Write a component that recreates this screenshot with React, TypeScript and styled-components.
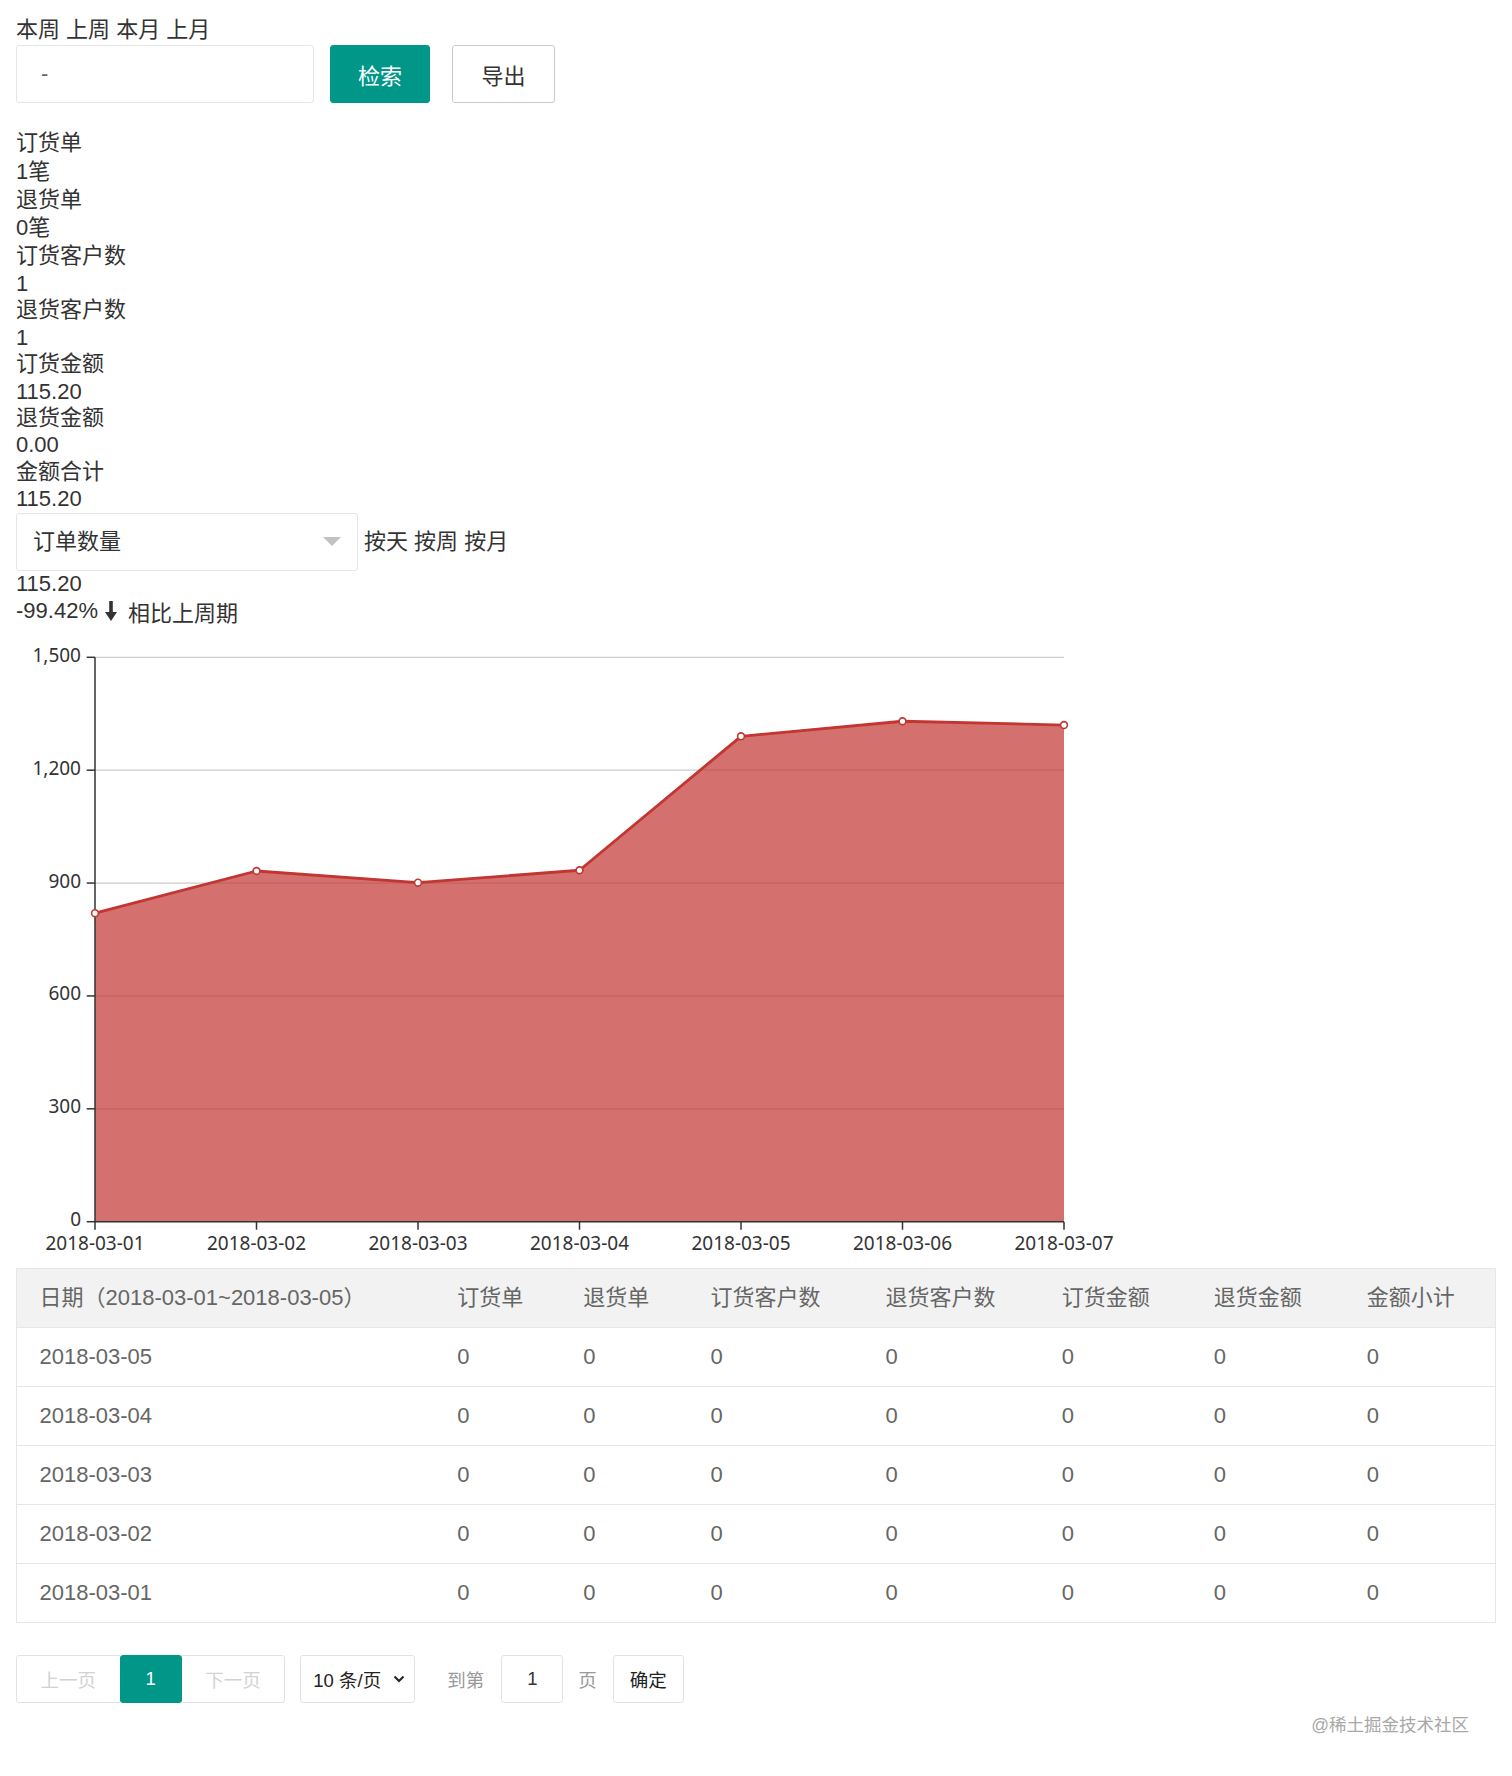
import styled, { createGlobalStyle } from 'styled-components'

//-----------------------------------------------------------------------------
// Data
//-----------------------------------------------------------------------------
const stats: [string, string][] = [
  ['订货单', '1笔'],
  ['退货单', '0笔'],
  ['订货客户数', '1'],
  ['退货客户数', '1'],
  ['订货金额', '115.20'],
  ['退货金额', '0.00'],
  ['金额合计', '115.20']
]

const days = [
  '2018-03-01',
  '2018-03-02',
  '2018-03-03',
  '2018-03-04',
  '2018-03-05',
  '2018-03-06',
  '2018-03-07'
]
const values = [820, 932, 901, 934, 1290, 1330, 1320]

const columns = [
  { title: '日期（2018-03-01~2018-03-05）', width: 418 },
  { title: '订货单', width: 126 },
  { title: '退货单', width: 127 },
  { title: '订货客户数', width: 175 },
  { title: '退货客户数', width: 176 },
  { title: '订货金额', width: 152 },
  { title: '退货金额', width: 153 },
  { title: '金额小计', width: 151 }
]
const rows = ['2018-03-05', '2018-03-04', '2018-03-03', '2018-03-02', '2018-03-01']

const hasCJK = (s: string): boolean => /[\u4e00-\u9fff]/.test(s)

//-----------------------------------------------------------------------------
// Chart
//-----------------------------------------------------------------------------
const PLOT_LEFT = 79
const PLOT_RIGHT = 1048
const PLOT_TOP = 32.3
const PLOT_BOTTOM = 596.7
const Y_MAX = 1500

const xAt = (i: number): number =>
  PLOT_LEFT + (i * (PLOT_RIGHT - PLOT_LEFT)) / (days.length - 1)
const yAt = (v: number): number =>
  PLOT_BOTTOM - (v * (PLOT_BOTTOM - PLOT_TOP)) / Y_MAX

const AreaChart = (): JSX.Element => {
  const points = values.map((v, i) => `${xAt(i)},${yAt(v)}`).join(' ')
  const area = `${PLOT_LEFT},${PLOT_BOTTOM} ${points} ${PLOT_RIGHT},${PLOT_BOTTOM}`
  const ticks = [0, 300, 600, 900, 1200, 1500]

  return (
    <ChartSvg width={1110} height={643} viewBox="0 0 1110 643">
      {ticks.map((t) => (
        <g key={t}>
          {t > 0 && (
            <line
              x1={PLOT_LEFT}
              x2={PLOT_RIGHT}
              y1={yAt(t)}
              y2={yAt(t)}
              stroke="#ccc"
              strokeWidth={1.2}
            />
          )}
          <line
            x1={70.7}
            x2={PLOT_LEFT}
            y1={yAt(t)}
            y2={yAt(t)}
            stroke="#333"
            strokeWidth={1.5}
          />
          <AxisLabel x={65} y={yAt(t) - 2.5} textAnchor="end" dominantBaseline="central">
            {t.toLocaleString('en-US')}
          </AxisLabel>
        </g>
      ))}
      <polygon points={area} fill="rgba(194,53,49,0.7)" />
      <polyline
        points={points}
        fill="none"
        stroke="#c23531"
        strokeWidth={2.8}
        strokeLinejoin="round"
      />
      <line
        x1={PLOT_LEFT}
        x2={PLOT_LEFT}
        y1={PLOT_TOP}
        y2={PLOT_BOTTOM}
        stroke="#333"
        strokeWidth={1.5}
      />
      <line
        x1={PLOT_LEFT}
        x2={PLOT_RIGHT}
        y1={PLOT_BOTTOM}
        y2={PLOT_BOTTOM}
        stroke="#333"
        strokeWidth={1.5}
      />
      {days.map((d, i) => (
        <g key={d}>
          <line
            x1={xAt(i)}
            x2={xAt(i)}
            y1={PLOT_BOTTOM}
            y2={PLOT_BOTTOM + 8}
            stroke="#333"
            strokeWidth={1.5}
          />
          <AxisLabel x={xAt(i)} y={618} textAnchor="middle" dominantBaseline="central">
            {d}
          </AxisLabel>
        </g>
      ))}
      {values.map((v, i) => (
        <circle
          key={i}
          cx={xAt(i)}
          cy={yAt(v)}
          r={3.4}
          fill="#fff"
          stroke="#c23531"
          strokeWidth={1.6}
        />
      ))}
    </ChartSvg>
  )
}

//-----------------------------------------------------------------------------
// Component
//-----------------------------------------------------------------------------
const App = (): JSX.Element => {
  return (
    <Page>
      <GlobalStyle />
      <Line $cjk>本周 上周 本月 上月</Line>
      <FormRow>
        <DateInput>-</DateInput>
        <Button $variant="primary" $gap={16} $width={100}>
          检索
        </Button>
        <Button $variant="plain" $gap={22} $width={103}>
          导出
        </Button>
      </FormRow>

      <Stats>
        {stats.map(([label, value]) => (
          <div key={label}>
            <Line $cjk>{label}</Line>
            <Line $cjk={hasCJK(value)}>{value}</Line>
          </div>
        ))}
      </Stats>

      <SelectRow>
        <MetricSelect>
          <span>订单数量</span>
          <Caret />
        </MetricSelect>
        <span>按天 按周 按月</span>
      </SelectRow>
      <Line>115.20</Line>
      <CompareLine>
        -99.42%
        <ArrowDown width={12} height={20} viewBox="0 0 12 20">
          <rect x={4.2} y={0} width={3.6} height={12} fill="#333" />
          <polygon points="0,11 12,11 6,20" fill="#333" />
        </ArrowDown>
        相比上周期
      </CompareLine>

      <AreaChart />

      <Table>
        <colgroup>
          {columns.map((c) => (
            <Col key={c.title} $width={c.width} />
          ))}
        </colgroup>
        <thead>
          <tr>
            {columns.map((c) => (
              <Th key={c.title}>{c.title}</Th>
            ))}
          </tr>
        </thead>
        <tbody>
          {rows.map((r) => (
            <tr key={r}>
              <Td>{r}</Td>
              {columns.slice(1).map((c) => (
                <Td key={c.title}>0</Td>
              ))}
            </tr>
          ))}
        </tbody>
      </Table>

      <Pager>
        <PageGroup>
          <PageItem $disabled>上一页</PageItem>
          <PageItem $active>1</PageItem>
          <PageItem $disabled>下一页</PageItem>
        </PageGroup>
        <Limits>
          <span>10 条/页</span>
          <svg width={12} height={8} viewBox="0 0 12 8">
            <polyline
              points="1.5,1.5 6,6 10.5,1.5"
              fill="none"
              stroke="#222"
              strokeWidth={2}
            />
          </svg>
        </Limits>
        <SkipText $gap={32}>到第</SkipText>
        <SkipInput>1</SkipInput>
        <SkipText $gap={15}>页</SkipText>
        <SkipButton>确定</SkipButton>
      </Pager>

      <Watermark>@稀土掘金技术社区</Watermark>
    </Page>
  )
}

//-----------------------------------------------------------------------------
// Styled Components
//-----------------------------------------------------------------------------
const GlobalStyle = createGlobalStyle`
  html, body {
    margin: 0;
    padding: 0;
    background: #fff;
  }
  body {
    font-family: 'Liberation Sans', 'Noto Sans CJK SC', sans-serif;
    font-size: 22px;
    color: #333;
  }
  * {
    box-sizing: border-box;
  }
`
const Page = styled.div`
  width: 1512px;
  padding: 16px 16px 40px;
`
const Line = styled.div<{ $cjk?: boolean }>`
  line-height: ${(p) => (p.$cjk ? '28.3px' : '25.6px')};
  white-space: pre;
`
const FormRow = styled.div`
  display: flex;
  height: 58px;
  margin-top: 1px;
  margin-bottom: 26px;
`
const DateInput = styled.div`
  width: 298px;
  height: 58px;
  display: flex;
  align-items: center;
  padding-left: 24px;
  border: 1px solid #e6e6e6;
  border-radius: 3px;
  color: #666;
`
const Button = styled.div<{
  $variant: 'primary' | 'plain'
  $gap: number
  $width: number
}>`
  width: ${(p) => p.$width}px;
  height: 58px;
  margin-left: ${(p) => p.$gap}px;
  display: flex;
  align-items: center;
  justify-content: center;
  border-radius: 3px;
  border: 1px solid ${(p) => (p.$variant === 'primary' ? '#009688' : '#c9c9c9')};
  background: ${(p) => (p.$variant === 'primary' ? '#009688' : '#fff')};
  color: ${(p) => (p.$variant === 'primary' ? '#fff' : '#333')};
`
const Stats = styled.div``
const SelectRow = styled.div`
  display: flex;
  align-items: center;
  gap: 6px;
  height: 58px;
  margin-top: 1px;
  line-height: 28.3px;
`
const MetricSelect = styled.div`
  width: 342px;
  height: 58px;
  display: flex;
  align-items: center;
  justify-content: space-between;
  padding: 0 16px 0 16px;
  border: 1px solid #e6e6e6;
  border-radius: 3px;
`
const Caret = styled.span`
  width: 0;
  height: 0;
  border-style: solid;
  border-width: 9px 9px 0 9px;
  border-color: #c2c2c2 transparent transparent transparent;
`
const CompareLine = styled.div`
  display: flex;
  align-items: center;
  height: 28.3px;
`
const ArrowDown = styled.svg`
  margin: 1px 11px 0 7px;
`
const ChartSvg = styled.svg`
  display: block;
`
const AxisLabel = styled.text`
  font-family: 'Noto Sans', 'Liberation Sans', sans-serif;
  font-size: 19px;
  fill: #333;
`
const Table = styled.table`
  width: 1480px;
  border-collapse: collapse;
  table-layout: fixed;
  border: 1px solid #e6e6e6;
  color: #666;
`
const Col = styled.col<{ $width: number }>`
  width: ${(p) => p.$width}px;
`
const Th = styled.th`
  padding: 14px 22.5px;
  line-height: 30px;
  font-weight: 400;
  text-align: left;
  white-space: nowrap;
  background: #f2f2f2;
  border-bottom: 1px solid #e6e6e6;
`
const Td = styled.td`
  padding: 14px 22.5px;
  line-height: 30px;
  border-bottom: 1px solid #e6e6e6;
`
const Pager = styled.div`
  display: flex;
  align-items: center;
  margin-top: 32px;
  font-size: 18.5px;
  height: 48px;
`
const PageGroup = styled.div`
  display: flex;
`
const PageItem = styled.div<{ $active?: boolean; $disabled?: boolean }>`
  height: 48px;
  display: flex;
  align-items: center;
  padding: 0 ${(p) => (p.$active ? 25 : 23.5)}px;
  margin-right: -1px;
  border: 1px solid ${(p) => (p.$active ? '#009688' : '#e2e2e2')};
  background: ${(p) => (p.$active ? '#009688' : '#fff')};
  color: ${(p) => (p.$active ? '#fff' : p.$disabled ? '#d2d2d2' : '#333')};
  border-radius: ${(p) => (p.$active ? '3px' : '0')};
  position: relative;
  z-index: ${(p) => (p.$active ? 1 : 0)};
  &:first-child {
    border-radius: 3px 0 0 3px;
  }
  &:last-child {
    border-radius: 0 3px 3px 0;
  }
`
const Limits = styled.div`
  height: 48px;
  width: 115px;
  margin-left: 16px;
  display: flex;
  align-items: center;
  justify-content: space-between;
  padding: 0 9px 0 12px;
  border: 1px solid #e2e2e2;
  border-radius: 3px;
  color: #222;
`
const SkipText = styled.span<{ $gap: number }>`
  margin-left: ${(p) => p.$gap}px;
  color: #999;
`
const SkipInput = styled.div`
  width: 62px;
  height: 48px;
  margin-left: 17px;
  display: flex;
  align-items: center;
  justify-content: center;
  border: 1px solid #e2e2e2;
  border-radius: 3px;
  color: #333;
`
const SkipButton = styled.div`
  width: 71px;
  height: 48px;
  margin-left: 16px;
  display: flex;
  align-items: center;
  justify-content: center;
  border: 1px solid #e2e2e2;
  border-radius: 3px;
  color: #222;
`
const Watermark = styled.div`
  margin-top: 10px;
  padding-right: 27px;
  text-align: right;
  font-size: 17.5px;
  line-height: 25px;
  color: #a8a8a8;
`

export default App
